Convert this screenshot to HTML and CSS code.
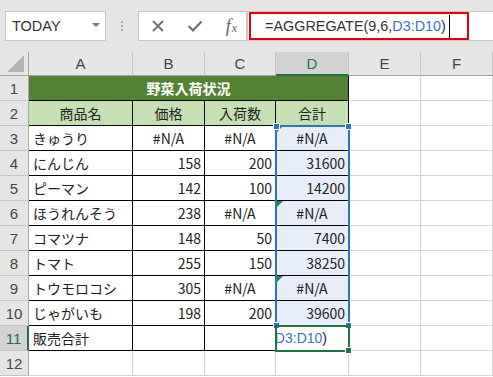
FILE: index.html
```html
<!DOCTYPE html>
<html lang="ja">
<head>
<meta charset="utf-8">
<title>AGGREGATE</title>
<link rel="stylesheet" href="styles.css">
</head>
<body>
<div class="bar">
  <div class="namebox"><span>TODAY</span><span class="drop"></span></div>
  <div class="grip"><i></i><i></i><i></i></div>
  <div class="fxbox">
    <svg class="ico" width="14" height="14" viewBox="0 0 14 14"><path d="M2 2 L12 12 M12 2 L2 12" stroke="#6f6f6f" stroke-width="1.8" fill="none"/></svg>
    <svg class="ico" width="16" height="14" viewBox="0 0 16 14"><path d="M1.5 7 L6 11.5 L14.5 2.5" stroke="#6f6f6f" stroke-width="2.2" fill="none"/></svg>
    <span class="fx">f<sub>x</sub></span>
  </div>
  <div class="formula">
    <div class="mark">
      <span>=AGGREGATE(9,6,<span class="ref">D3:D10</span>)</span><span class="caret"></span>
    </div>
  </div>
</div>

<div class="sheet">
  <div class="hd corner"><span class="tri"></span></div>
  <div class="hd">A</div>
  <div class="hd">B</div>
  <div class="hd">C</div>
  <div class="hd on-col">D</div>
  <div class="hd">E</div>
  <div class="hd">F</div>

  <div class="rh">1</div>
  <div class="c t title">野菜入荷状況</div>
  <div class="c"></div><div class="c"></div>

  <div class="rh">2</div>
  <div class="c t sub">商品名</div><div class="c t sub">価格</div><div class="c t sub">入荷数</div><div class="c t sub">合計</div>
  <div class="c"></div><div class="c"></div>

  <div class="rh">3</div>
  <div class="c t">きゅうり</div><div class="c t ctr">#N/A</div><div class="c t ctr">#N/A</div><div class="c t ctr sel flag">#N/A</div>
  <div class="c"></div><div class="c"></div>

  <div class="rh">4</div>
  <div class="c t">にんじん</div><div class="c t num">158</div><div class="c t num">200</div><div class="c t num sel">31600</div>
  <div class="c"></div><div class="c"></div>

  <div class="rh">5</div>
  <div class="c t">ピーマン</div><div class="c t num">142</div><div class="c t num">100</div><div class="c t num sel">14200</div>
  <div class="c"></div><div class="c"></div>

  <div class="rh">6</div>
  <div class="c t">ほうれんそう</div><div class="c t num">238</div><div class="c t ctr">#N/A</div><div class="c t ctr sel flag">#N/A</div>
  <div class="c"></div><div class="c"></div>

  <div class="rh">7</div>
  <div class="c t">コマツナ</div><div class="c t num">148</div><div class="c t num">50</div><div class="c t num sel">7400</div>
  <div class="c"></div><div class="c"></div>

  <div class="rh">8</div>
  <div class="c t">トマト</div><div class="c t num">255</div><div class="c t num">150</div><div class="c t num sel">38250</div>
  <div class="c"></div><div class="c"></div>

  <div class="rh">9</div>
  <div class="c t">トウモロコシ</div><div class="c t num">305</div><div class="c t ctr">#N/A</div><div class="c t ctr sel flag">#N/A</div>
  <div class="c"></div><div class="c"></div>

  <div class="rh">10</div>
  <div class="c t">じゃがいも</div><div class="c t num">198</div><div class="c t num">200</div><div class="c t num sel">39600</div>
  <div class="c"></div><div class="c"></div>

  <div class="rh on-row">11</div>
  <div class="c t">販売合計</div><div class="c t"></div><div class="c t"></div><div class="c t edit"><span>=AGGREGATE(9,6,<span class="ref">D3:D10</span>)</span></div>
  <div class="c"></div><div class="c"></div>

  <div class="rh">12</div>
  <div class="c"></div><div class="c"></div><div class="c"></div><div class="c"></div><div class="c"></div><div class="c"></div>

  <div class="range"><i class="h tl"></i><i class="h tr"></i><i class="h bl"></i><i class="h br"></i></div>
  <div class="active"><i class="fill"></i></div>
</div>
</body>
</html>
```

FILE: styles.css
```css
* { box-sizing: border-box; }
body { margin: 0; width: 493px; height: 377px; overflow: hidden; background: #fff;
       font-family: "Liberation Sans", Arial, sans-serif; color: #222; }

/* formula bar */
.bar { display: flex; align-items: stretch; height: 52px; padding: 11px 0 11px 5px; background: #e6e6e6; }
.namebox { width: 101px; background: #fff; border: 1px solid #c8c8c8; display: flex; align-items: center;
           justify-content: space-between; padding: 0 5px 0 6px; font-size: 14.5px; color: #333; }
.drop { width: 0; height: 0; border-left: 4px solid transparent; border-right: 4px solid transparent;
        border-top: 4px solid #777; margin-bottom: 3px; }
.grip { width: 32px; display: flex; flex-direction: column; align-items: center; justify-content: center; gap: 2px; }
.grip i { width: 2px; height: 2px; background: #a8a8a8; }
.fxbox { width: 109px; background: #fff; border: 1px solid #c8c8c8; display: flex; align-items: center;
         justify-content: space-between; padding: 0 9px 0 12px; }
.fx { font-family: "Liberation Serif", serif; font-style: italic; font-size: 18px; color: #606060; line-height: 1; }
.fx sub { font-size: 12px; vertical-align: 0; margin-left: 1px; }
.formula { flex: 1; min-width: 0; background: #fff; border: 1px solid #c8c8c8; border-right: 0; padding: 0 24px 0 1px; display: flex; }
.mark { flex: 1; min-width: 0; border: 2px solid #e2000f; display: flex; align-items: center; padding-left: 14px;
        font-size: 14.4px; color: #333; white-space: nowrap; }
.ref { color: #3b6fc6; }
.caret { width: 1px; height: 23px; background: #000; margin-left: 3px; }

/* grid */
.sheet { position: relative; display: grid;
         grid-template-columns: 29px 104px 72px 71px 73px 72px 72px;
         grid-template-rows: 24px repeat(12, 25px); }
.hd, .rh { background: #e6e6e6; color: #444; font-size: 15px; display: flex; align-items: center;
           justify-content: center; border-right: 1px solid #c6c6c6; border-bottom: 1px solid #9f9f9f; }
.rh { border-right: 1px solid #a8a8a8; border-bottom: 1px solid #c6c6c6; }
.corner { justify-content: flex-end; align-items: flex-end; padding: 0 4px 3px 0; border-right-color: #a8a8a8; }
.tri { width: 0; height: 0; border-left: 17px solid transparent; border-bottom: 17px solid #b5b5b5; }
.on-col { background: #d2d2d2; color: #217346; border-bottom: 2px solid #217346; }
.on-row { background: #d2d2d2; color: #217346; border-right: 2px solid #217346; }

.c { border-right: 1px solid #d4d4d4; border-bottom: 1px solid #d4d4d4; }
.t { border-right-color: #000; border-bottom-color: #000; font-family: "Noto Sans CJK JP", sans-serif;
     font-size: 14px; color: #222; display: flex; align-items: center; padding: 0 4px; white-space: nowrap; }
.title { grid-column: span 4; background: #548235; color: #fff; font-weight: bold; justify-content: center; }
.sub { background: #c6e0b4; justify-content: center; }
.ctr { justify-content: center; }
.num { justify-content: flex-end; padding-right: 3px; }
.sel { background: #e8eef9; }
.flag { position: relative; }
.flag::before { content: ""; position: absolute; left: 1px; top: 0; border-top: 6px solid #1e8a3c; border-right: 6px solid transparent; }
.edit { overflow: hidden; justify-content: flex-end; padding-right: 21px; font-family: "Liberation Sans", Arial, sans-serif; }

/* selection overlays */
.range { position: absolute; left: 275px; top: 73px; width: 75px; height: 202px; border: 2px solid #2f6fd0; }
.h { position: absolute; width: 7px; height: 7px; background: #2f6fd0; border: 1px solid #fff; }
.tl { left: -4px; top: -4px; } .tr { right: -4px; top: -4px; }
.bl { left: -4px; bottom: -4px; } .br { right: -4px; bottom: -4px; }
.active { position: absolute; left: 275px; top: 273px; width: 75px; height: 27px; border: 2px solid #217346; }
.fill { position: absolute; right: -4px; bottom: -4px; width: 7px; height: 7px; background: #217346; border: 1px solid #fff; }
```
